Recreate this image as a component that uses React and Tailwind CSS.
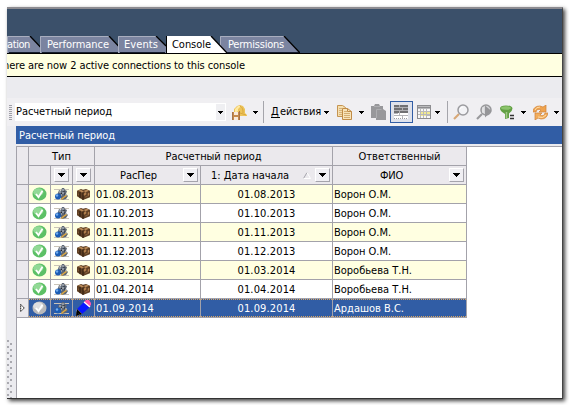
import { useLayoutEffect, useRef, useState } from "react";
import { clsx } from "clsx";

/* Single-line caption whose letters are spaced to fill the given width. */
function Label({ children, width, className }) {
  const ref = useRef(null);
  const [spacing, setSpacing] = useState(0);
  useLayoutEffect(() => {
    const natural = ref.current.getBoundingClientRect().width;
    setSpacing((width - natural) / children.length);
  }, [children, width]);
  return (
    <span ref={ref} className={clsx("inline-block shrink-0 whitespace-nowrap", className)} style={{ letterSpacing: spacing }}>
      {children}
    </span>
  );
}

function Arrow({ className }) {
  return (
    <svg className={clsx("h-[3px] w-[5px] shrink-0", className)} viewBox="0 0 5 3" shapeRendering="crispEdges">
      <path d="M0 0h5v1h-1v1h-1v1h-1v-1h-1v-1h-1z" fill="#000" />
    </svg>
  );
}

function FilterButton({ className }) {
  return (
    <div className={clsx("flex h-[14px] w-[15px] shrink-0 items-center justify-center border border-t-white border-l-white border-r-[#a5a4ac] border-b-[#a5a4ac] bg-[#f0eff3]", className)}>
      <svg className="h-1 w-[7px]" viewBox="0 0 7 4" shapeRendering="crispEdges">
        <path d="M0 0h7v1h-1v1h-1v1h-1v1h-1v-1h-1v-1h-1v-1h-1z" fill="#000" />
      </svg>
    </div>
  );
}

const tabs = [
  { text: "ation", width: 39, label: 23, box: "w-[39px]", slant: 16 },
  { text: "Performance", width: 85, label: 62, box: "w-[85px] -ml-[6px] pl-[7px]", slant: 16 },
  { text: "Events", width: 48, label: 34, box: "w-[48px] -ml-[7px] pl-[6px]", slant: 10 },
  { text: "Console", width: 61, label: 39, box: "w-[61px] pl-[6px]", slant: 16, active: true },
  { text: "Permissions", width: 80, label: 56, box: "w-[80px] -ml-[7px] pl-[8px]", slant: 16 },
];

function Tab({ tab }) {
  const w = tab.width;
  const s = tab.slant;
  const cut = s === 16 ? 17 : 10;
  return (
    <div className={clsx("relative h-[17px] shrink-0", tab.box, tab.active ? "z-10 text-black" : "text-white")}>
      <svg className="absolute inset-0 size-full" viewBox={`0 0 ${w} 17`}>
        <path d={`M0 0H${w - s}L${w} ${cut}V17H0Z`} fill={tab.active ? "#fff" : "#7b84a0"} />
        {!tab.active && <path d={`M0.5 17V0.5H${w - s}`} fill="none" stroke="#a9aebf" />}
        {!tab.active && <path d={`M2 16.5H${w - 1}`} stroke="#151c2c" />}
        {tab.active && <path d="M0.5 0V17" stroke="#000" />}
        <path d={`M${w - s} 0L${w} ${cut}`} stroke="#000" strokeWidth="1.3" />
      </svg>
      <Label width={tab.label} className="relative pt-px leading-[16px]">{tab.text}</Label>
    </div>
  );
}

function HelmetIcon({ className }) {
  return (
    <svg className={clsx("h-[17px] w-4 shrink-0", className)} viewBox="0 0 16 17">
      <path d="M3 9V5L6 2 9 1l3 1 2 3v4l2 2v1H8L3 10Z" fill="#edc45a" />
      <path d="M4 5l3-3 3 0-3 3v3H4Z" fill="#ffe9a0" />
      <path d="M9 2c3 2 3 4 3 7M6 8l9 3" stroke="#d9a83e" fill="none" />
      <path d="M1 8h8v8H1Z" fill="#c58a4d" />
      <path d="M3 8h4v3H3ZM3 13h4v3H3Z" fill="#f9eadb" />
      <path d="M1.500 8v8M8.500 7v9" stroke="#a9744a" />
    </svg>
  );
}

function CopyIcon({ className }) {
  return (
    <svg className={clsx("h-[15px] w-[15px] shrink-0", className)} viewBox="0 0 15 15">
      <path d="M.5 .5h5l3 2v9h-8Z" fill="#f6dfae" stroke="#c59451" />
      <path d="M2 3.500h3M2 5.500h4M2 7.500h4M2 9.500h4" stroke="#d5b27c" />
      <path d="M5.500 3.500h5l4 3v8h-9Z" fill="#f8e3b8" stroke="#c18c47" />
      <path d="M7 6.500h3M7 8.500h6M7 10.500h6M7 12.500h6" stroke="#d3ad72" />
      <path d="M10.500 3.500v3h4" fill="none" stroke="#c18c47" />
    </svg>
  );
}

function PasteIcon({ className }) {
  return (
    <svg className={clsx("h-4 w-[15px] shrink-0", className)} viewBox="0 0 15 16">
      <path d="M0 2h3l1-2h4l1 2h3v3l3 2v9H5v-2H0Z" fill="#98989b" />
      <path d="M3 2.500h6M5.500 14V5.500h5" fill="none" stroke="#aeaeb1" />
    </svg>
  );
}

function RowsIcon() {
  return (
    <svg className="h-[14px] w-[15px]" viewBox="0 0 15 14" shapeRendering="crispEdges">
      <path d="M0 0h14v8H0Z" fill="#707073" />
      <path d="M0 2h14v1H0ZM0 5h14v1H0ZM5 0h1v2H5ZM8 3h1v2H8ZM5 6h1v2H5Z" fill="#b0b0b4" />
      <path d="M0 8h14v6H0Z" fill="#fff" />
      <path d="M0 8h4v1H0ZM0 10h14v1H0ZM5 8h1v2H5ZM8 11h1v2H8Z" fill="#b4b4b9" />
      <path d="M0 13h1v1H0ZM2 13h1v1H2ZM4 13h1v1H4ZM6 13h1v1H6ZM8 13h1v1H8ZM10 13h1v1h-1ZM12 13h1v1h-1Z" fill="#9c9ca2" />
    </svg>
  );
}

function TableIcon({ className }) {
  return (
    <svg className={clsx("h-[14px] w-[14px] shrink-0", className)} viewBox="0 0 14 14" shapeRendering="crispEdges">
      <path d="M0 0h14v14H0Z" fill="#8d8d90" />
      <path d="M1 3h12v10H1Z" fill="#b9b9bb" />
      <path d="M1 1h12v1H1Z" fill="#bbbbbd" />
      <path d="M1 4h2v2H1ZM4 4h2v2H4ZM7 4h2v2H7ZM10 4h3v2h-3ZM1 7h2v2H1ZM1 10h2v3H1ZM4 10h2v3H4ZM7 10h2v3H7ZM10 11h3v2h-3Z" fill="#f8f8f8" />
      <path d="M4 7h2v2H4ZM7 7h2v2H7ZM10 7h3v2h-3ZM4 10h2v1H4ZM7 10h2v1H7Z" fill="#f2ea90" />
    </svg>
  );
}

function FindIcon({ className }) {
  return (
    <svg className={clsx("h-4 w-4 shrink-0", className)} viewBox="0 0 16 16">
      <path d="M1 15l5-5" stroke="#d8a877" strokeWidth="2.200" />
      <circle cx="10" cy="6" r="5" fill="#f3f3f6" stroke="#9b9b9f" strokeWidth="1.500" />
      <path d="M7 5q1-2 3-2" stroke="#fff" fill="none" />
    </svg>
  );
}

function FindNextIcon({ className }) {
  return (
    <svg className={clsx("h-4 w-4 shrink-0", className)} viewBox="0 0 16 16">
      <path d="M1 15l5-5" stroke="#99999c" strokeWidth="2.200" />
      <circle cx="10" cy="6" r="5" fill="#d5d5d8" stroke="#98989b" strokeWidth="1.500" />
      <path d="M9 1.500l6.500 5.500L9 13.500Z" fill="#959598" />
      <path d="M7 3v6" stroke="#eee" />
    </svg>
  );
}

function FunnelIcon({ className }) {
  return (
    <svg className={clsx("h-[15px] w-[15px] shrink-0", className)} viewBox="0 0 15 15">
      <path d="M0 3.500q0-3 6-3t6.500 3q0 2.500-3.500 5v4.500l-4 1V9Q0 6 0 3.500Z" fill="#62a044" />
      <ellipse cx="6" cy="3" rx="5" ry="1.700" fill="#8cc36c" />
      <path d="M6.500 7v6" stroke="#a1c987" strokeWidth="1.500" />
      <path d="M9.500 9h5.500v6H9.500Z" fill="#f0eff2" />
      <path d="M10 10.500h4M10 13.500h4" stroke="#333" strokeWidth="1.400" />
    </svg>
  );
}

function RefreshIcon({ className }) {
  return (
    <svg className={clsx("h-[15px] w-[15px] shrink-0", className)} viewBox="0 0 15 15">
      <path d="M0 6q1-5 7-5l3 1 3-2v7H6l2-2Q4 3 3 7H0Z" fill="#efa34f" stroke="#d08338" strokeWidth=".7" />
      <path d="M15 8q-1 6-7 6l-3-1-3 2V8h7l-2 2q4 2 5-2Z" fill="#f2ad5c" stroke="#d08338" strokeWidth=".7" />
      <path d="M2 5q1-3 5-3M5 12q5 2 8-2" fill="none" stroke="#ffdda9" />
    </svg>
  );
}

function Divider({ className }) {
  return <div className={clsx("h-[22px] w-px shrink-0 bg-[#a5a5ab]", className)} />;
}

function Toolbar() {
  return (
    <div className="flex h-[28px] items-center bg-[#f0eff2] pl-[2px]">
      <div className="flex h-[15px] w-[3px] shrink-0 flex-col justify-between">
        {Array.from({ length: 8 }, (_, i) => (
          <div key={i} className="h-px bg-[#9e9ea6]" />
        ))}
      </div>
      <div className="ml-[3px] flex h-[18px] w-[211px] shrink-0 items-center bg-white pl-[1px]">
        <Label width={96}>Расчетный период</Label>
        <div className="mr-px ml-auto flex h-4 w-[9px] items-center justify-center bg-[#efeff2]">
          <Arrow />
        </div>
      </div>
      <HelmetIcon className="ml-[5px]" />
      <Arrow className="ml-[6px]" />
      <Divider className="ml-[5px]" />
      <span className="ml-[7px] flex shrink-0">
        <Label width={9} className="border-b border-black leading-[11px]">Д</Label>
        <Label width={41} className="leading-[11px]">ействия</Label>
      </span>
      <Arrow className="ml-[3px]" />
      <CopyIcon className="ml-[8px]" />
      <Arrow className="ml-[7px]" />
      <PasteIcon className="ml-[7px]" />
      <div className="ml-[4px] flex h-[22px] w-[23px] shrink-0 items-center justify-center border border-[#315da5] bg-[#dfe2eb]">
        <RowsIcon />
      </div>
      <TableIcon className="ml-[4px]" />
      <Arrow className="ml-[4px]" />
      <Divider className="ml-[7px]" />
      <FindIcon className="ml-[5px]" />
      <FindNextIcon className="ml-[7px]" />
      <FunnelIcon className="ml-[8px]" />
      <Arrow className="ml-[6px]" />
      <RefreshIcon className="ml-[7px]" />
      <Arrow className="ml-[6px]" />
    </div>
  );
}

function StatusIcon({ selected }) {
  return (
    <svg className="h-[14px] w-[15px]" viewBox="0 0 15 15" preserveAspectRatio="none">
      <circle cx="7.500" cy="7.500" r="7" fill={selected ? "#b9b9bb" : "#5cc066"} />
      <ellipse cx="6.300" cy="5.500" rx="5" ry="4.200" fill={selected ? "#dededf" : "#92d996"} />
      <path d="M4 7.500l2.500 3.500 4-7" stroke="#fff" strokeWidth="1.800" fill="none" />
    </svg>
  );
}

function MachineIcon() {
  return (
    <svg className="h-[14px] w-[15px]" viewBox="0 0 15 14">
      <path d="M0 2.500h15M0 12.500h15" stroke="#c9c3b8" />
      <path d="M4 6l1-3 2 1 1-3h2l1 2 2 1-1 3 2 2-2 3-4 1-2-3-3-1Z" fill="#5d6674" />
      <path d="M5 5h2M8 3h2M8 6h2M11 8h2M7 8h1" stroke="#c3cad2" />
      <path d="M10 4v1M7 6.500h1M10 7h1" stroke="#25282e" />
      <circle cx="4" cy="9.500" r="3" fill="#1c5db5" />
      <circle cx="3" cy="8.500" r="1.200" fill="#74aeef" />
      <path d="M7.500 12.500l2-2 3-2" stroke="#e0a93e" strokeWidth="1.500" fill="none" />
    </svg>
  );
}

function BoxIcon() {
  return (
    <svg className="h-[12px] w-[13px]" viewBox="0 0 13 13" preserveAspectRatio="none">
      <path d="M0 3l4-2 2 1 3-1 4 2v7l-7 3-6-4Z" fill="#5f4025" />
      <path d="M1 3l3-1 3 2-2 1ZM7 3l3-1 2 1-4 2Z" fill="#ba8a58" />
      <path d="M6 5v8M3 4v7" stroke="#2c190b" />
      <path d="M7 6l2-1v2L7 8ZM11 6l1-.5v2l-1 .5ZM1 6.500l1 .5M8 10l4-2" fill="#bd8750" stroke="#a87849" strokeWidth=".6" />
    </svg>
  );
}

function PencilIcon() {
  return (
    <svg className="h-4 w-4 shrink-0" viewBox="0 0 16 16">
      <path d="M1 9l7-7 6 5-8 7Z" fill="#0b17ff" />
      <path d="M8 2l2-2h3l2 3v2l-2 2Z" fill="#ff55ac" />
      <path d="M8 2l6 5" stroke="#fff" strokeWidth="1.400" />
      <path d="M1 9l5 5-5 2H0Z" fill="#f3d3a0" />
      <path d="M.5 11l3 4L0 16ZM1 9l5 5-2 1-3-3Z" fill="#000" />
    </svg>
  );
}

const rows = [
  ["01.08.2013", "Ворон О.М.", 57],
  ["01.10.2013", "Ворон О.М.", 57],
  ["01.11.2013", "Ворон О.М.", 57],
  ["01.12.2013", "Ворон О.М.", 57],
  ["01.03.2014", "Воробьева Т.Н.", 78],
  ["01.04.2014", "Воробьева Т.Н.", 78],
  ["01.09.2014", "Ардашов В.С.", 70],
];

function Row({ row, index }) {
  const [date, name, nameWidth] = row;
  const selected = index === rows.length - 1;
  const cell = clsx(
    "flex items-center",
    selected
      ? "border-y border-dotted border-[#d8a460] bg-[#315da5] text-white"
      : index % 2 === 0
        ? "bg-[#ffffe1]"
        : "bg-white"
  );
  return (
    <>
      <div className="flex items-center justify-center bg-[#ebe9ed]">
        {selected && (
          <svg className="h-[8px] w-[5px]" viewBox="0 0 5 9">
            <path d="M.5 .5l4 4-4 4Z" fill="#fff" stroke="#000" strokeDasharray="1.500 .5" />
          </svg>
        )}
      </div>
      <div className={clsx(cell, "justify-center")}><StatusIcon selected={selected} /></div>
      <div className={clsx(cell, "justify-center")}><MachineIcon /></div>
      <div className={clsx(cell, "justify-center")}>{selected ? <PencilIcon /> : <BoxIcon />}</div>
      <div className={clsx(cell, "pl-px")}><Label width={58} className="pt-[2px]">{date}</Label></div>
      <div className={clsx(cell, "justify-center")}><Label width={58} className="pt-[2px]">{date}</Label></div>
      <div className={clsx(cell, "pl-px")}><Label width={nameWidth} className="pt-[2px]">{name}</Label></div>
    </>
  );
}

function Grid() {
  const head = "flex items-center bg-[#ebe9ed]";
  return (
    <div className="grid w-[451px] auto-rows-[18px] grid-cols-[11px_21px_21px_21px_105px_131px_133px] gap-px bg-[#a3a2aa] p-px">
      <div className="row-span-2 bg-[#ebe9ed]" />
      <div className={clsx(head, "col-span-3 justify-center")}><Label width={19} className="pt-[2px]">Тип</Label></div>
      <div className={clsx(head, "col-span-2 justify-center")}><Label width={96} className="pt-[2px]">Расчетный период</Label></div>
      <div className={clsx(head, "justify-center")}><Label width={82} className="pt-[2px]">Ответственный</Label></div>
      <div className={head} />
      <div className={clsx(head, "justify-center")}><FilterButton /></div>
      <div className={clsx(head, "justify-center")}><FilterButton /></div>
      <div className={clsx(head, "pr-[2px] pl-[25px]")}><Label width={37} className="pt-[2px]">РасПер</Label><FilterButton className="ml-auto" /></div>
      <div className={clsx(head, "pr-[2px] pl-[10px]")}>
        <Label width={78} className="pt-[2px]">1: Дата начала</Label>
        <svg className="ml-auto h-[7px] w-2" viewBox="0 0 8 7">
          <path d="M4 .5L.5 6.500" stroke="#a5a4ac" fill="none" />
          <path d="M4 .5L7.500 6.500H.5" stroke="#fff" fill="none" />
        </svg>
        <FilterButton className="ml-[4px]" />
      </div>
      <div className={clsx(head, "pr-[2px] pl-[47px]")}><Label width={23} className="pt-[2px]">ФИО</Label><FilterButton className="ml-auto" /></div>
      {rows.map((row, i) => <Row key={row[0]} row={row} index={i} />)}
    </div>
  );
}

function SplitterGrip() {
  return (
    <div className="mt-auto mb-[2px] flex flex-col gap-[4px]">
      {Array.from({ length: 10 }, (_, i) => (
        <div key={i} className="flex h-[2px] gap-px">
          <div className="size-[2px] bg-[#a9a9af]" />
          <div className="mt-[3px] size-[2px] bg-[#a9a9af]" />
        </div>
      ))}
    </div>
  );
}

export default function App() {
  return (
    <div className="h-[405px] w-[569px] overflow-hidden bg-white pt-[7px] pl-[7px] font-['DejaVu_Sans_Condensed','DejaVu_Sans',sans-serif] text-[11px] leading-[14px] text-black [font-stretch:condensed]">
      <div className="flex h-[392px] w-[556px] flex-col overflow-hidden border-t-2 border-r border-b border-t-[#8c8b90] border-r-[#444] border-b-[#333] bg-[#ebebef] shadow-[2px_2px_4px_rgba(0,0,0,0.75)]">
        <div className="flex h-[44px] shrink-0 items-end overflow-hidden bg-[#3b506a]">
          {tabs.map((tab) => <Tab key={tab.text} tab={tab} />)}
        </div>
        <div className="flex h-[24px] shrink-0 items-center border-y border-black bg-[#ffffe1]">
          <Label width={242} className="-ml-[4px] pt-[2px]">here are now 2 active connections to this console</Label>
        </div>
        <div className="h-[21px] shrink-0" />
        <Toolbar />
        <div className="flex min-h-0 flex-1">
          <div className="flex w-[9px] shrink-0 flex-col">
            <SplitterGrip />
          </div>
          <div className="flex min-w-0 flex-1 flex-col">
            <div className="flex h-[18px] shrink-0 items-center bg-[#315da5] pl-[3px] text-white">
              <Label width={96} className="pt-[2px]">Расчетный период</Label>
            </div>
            <div className="h-[2px] shrink-0 bg-[#ebebef]" />
            <div className="flex-1 border-t border-l border-[#a3a2aa] bg-white">
              <div className="-mt-px -ml-px">
                <Grid />
              </div>
            </div>
          </div>
        </div>
      </div>
    </div>
  );
}
